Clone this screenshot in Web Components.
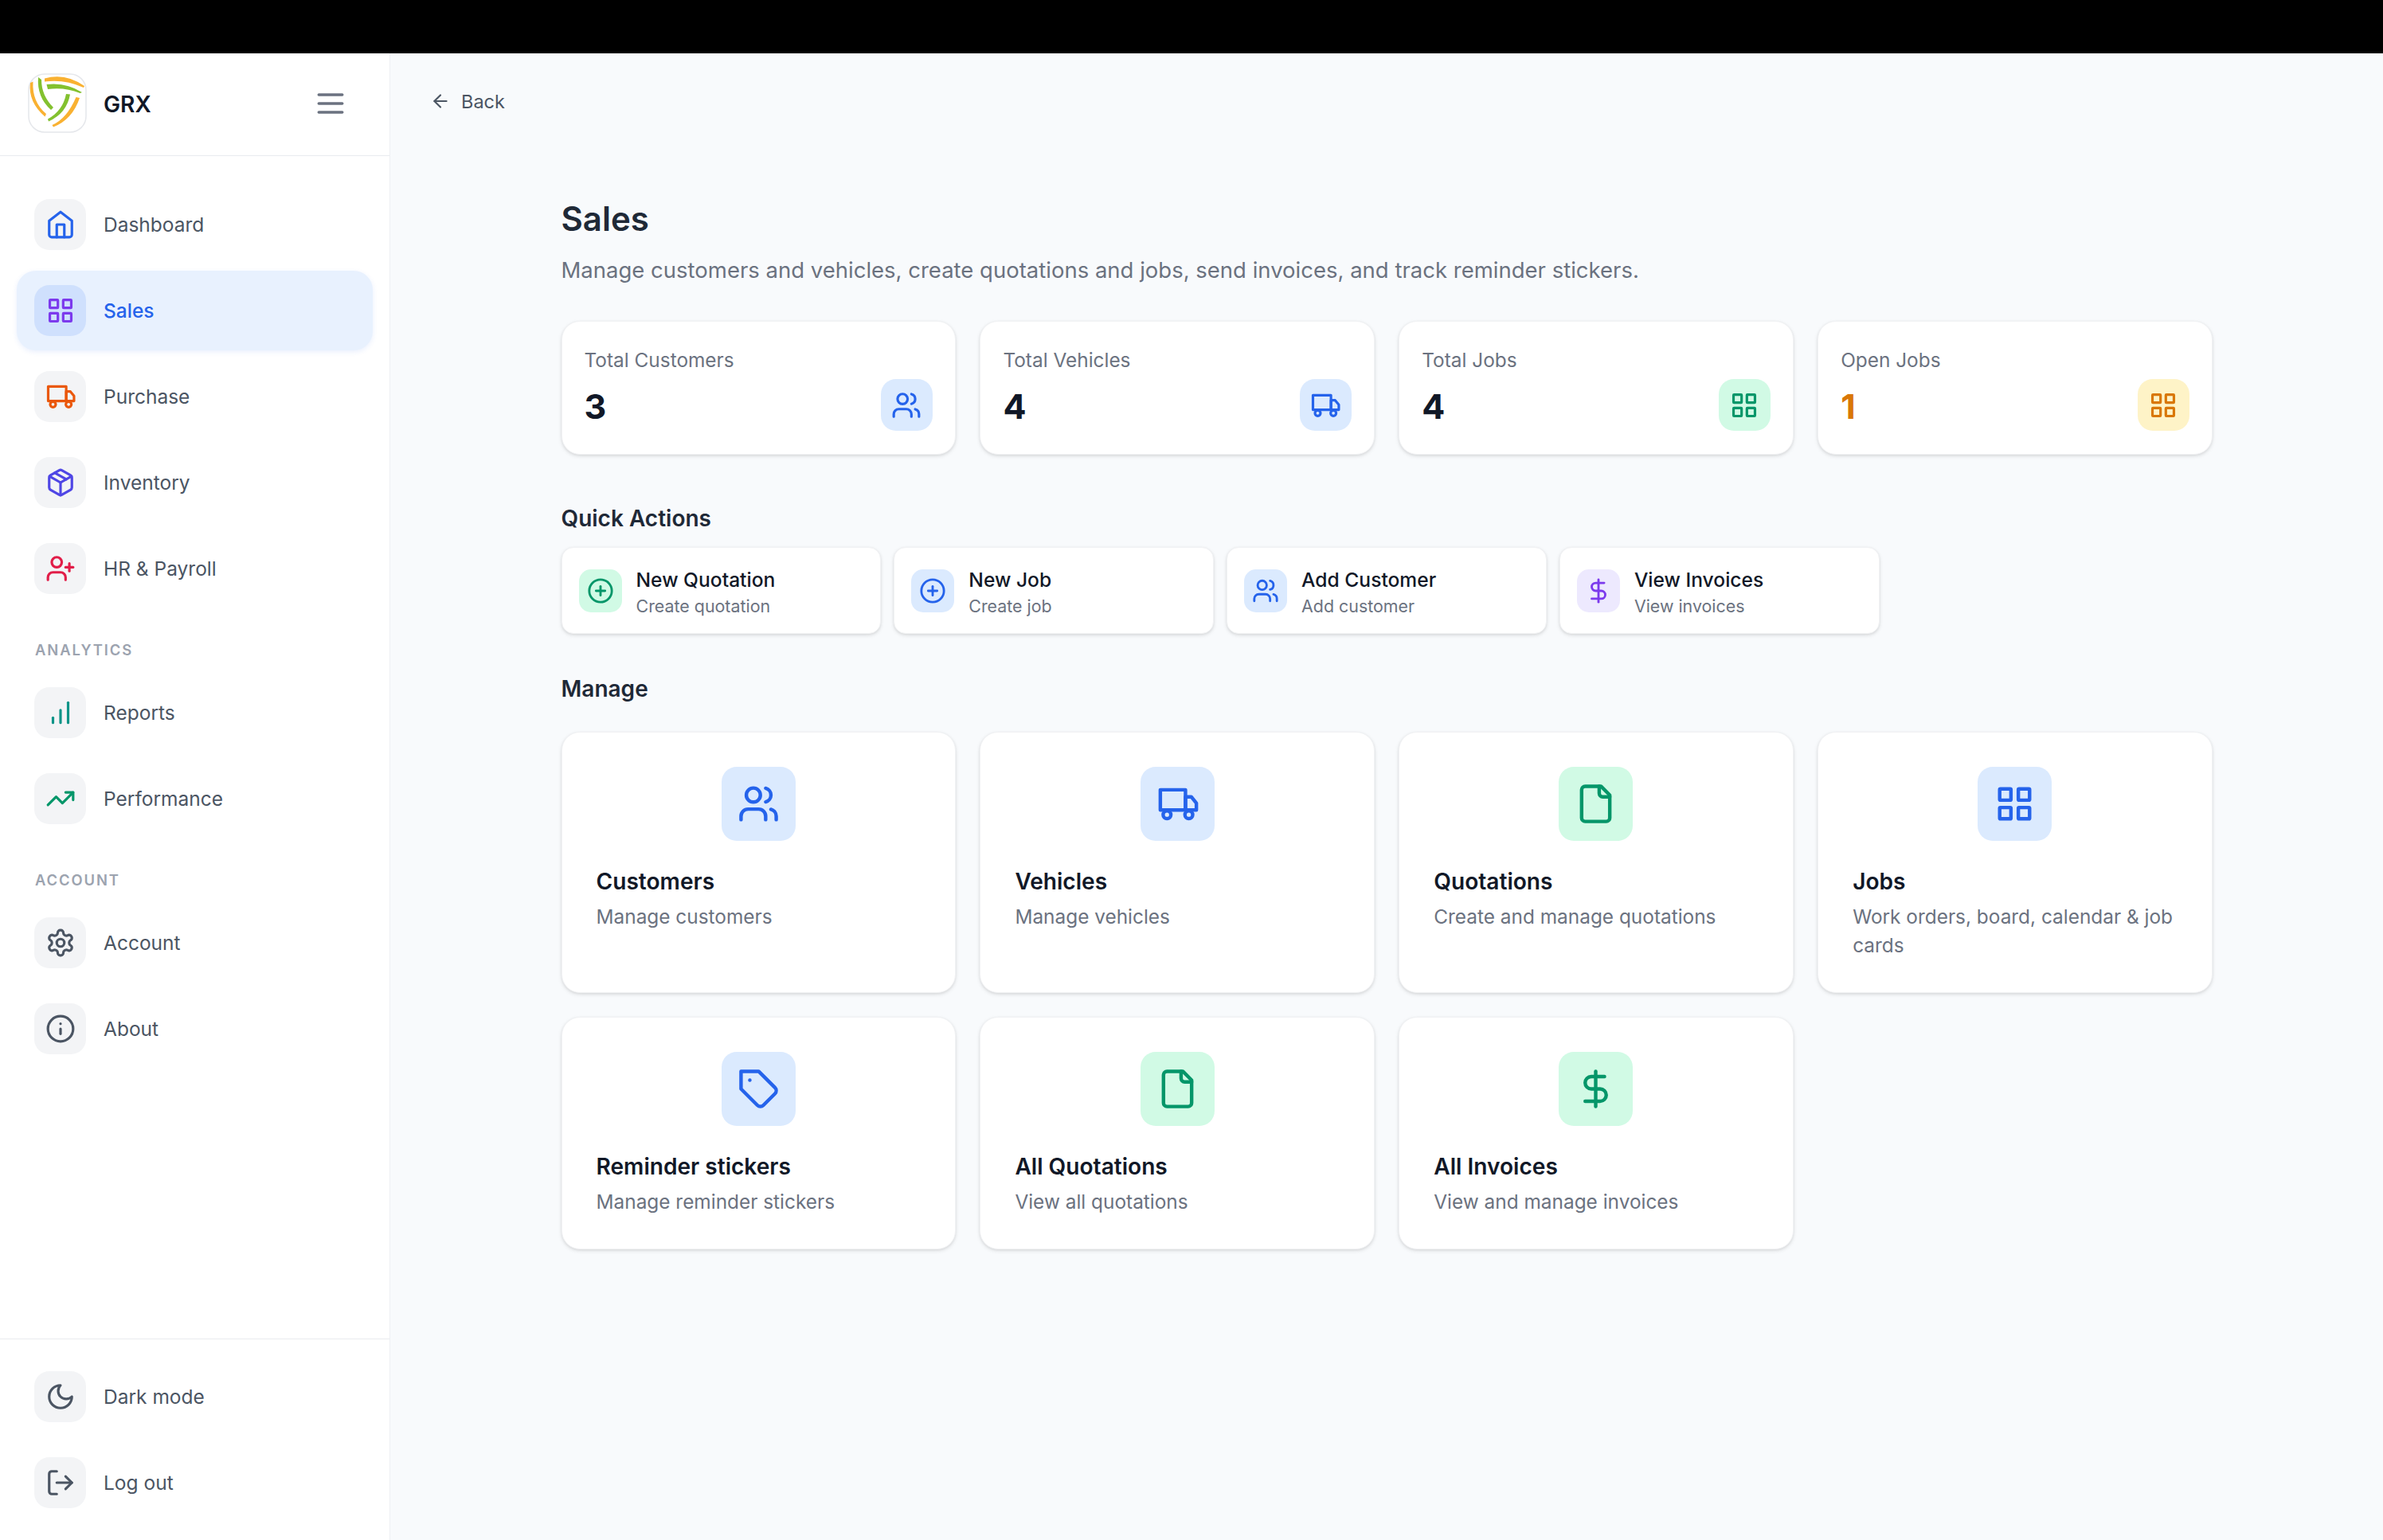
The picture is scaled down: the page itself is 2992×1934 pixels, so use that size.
<!DOCTYPE html>
<html lang="en">
<head>
<meta charset="utf-8">
<title>Sales</title>
<style>
html,body{margin:0;padding:0;background:#f8fafc;font-family:Inter,"Noto Sans",sans-serif;color:#111827;}
</style>
</head>
<body>
<app-shell>
  <side-bar slot="side">
    <nav-item icon="home" color="#2563eb">Dashboard</nav-item>
    <nav-item icon="grid" color="#7c3aed" active>Sales</nav-item>
    <nav-item icon="truck" color="#ea580c">Purchase</nav-item>
    <nav-item icon="package" color="#4f46e5">Inventory</nav-item>
    <nav-item icon="userplus" color="#e11d48">HR &amp; Payroll</nav-item>
    <nav-label>ANALYTICS</nav-label>
    <nav-item icon="bars" color="#0d9488">Reports</nav-item>
    <nav-item icon="trend" color="#059669">Performance</nav-item>
    <nav-label>ACCOUNT</nav-label>
    <nav-item icon="settings" color="#4b5563">Account</nav-item>
    <nav-item icon="info" color="#4b5563">About</nav-item>
    <nav-item slot="foot" icon="moon" color="#4b5563">Dark mode</nav-item>
    <nav-item slot="foot" icon="logout" color="#4b5563">Log out</nav-item>
  </side-bar>
  <back-link>Back</back-link>
  <page-content>
    <page-title slot="head" sub="Manage customers and vehicles, create quotations and jobs, send invoices, and track reminder stickers.">Sales</page-title>
    <card-grid cols="4" gap="30.5">
      <stat-card label="Total Customers" value="3" icon="users" tone="blue"></stat-card>
      <stat-card label="Total Vehicles" value="4" icon="truck" tone="blue"></stat-card>
      <stat-card label="Total Jobs" value="4" icon="grid" tone="green"></stat-card>
      <stat-card label="Open Jobs" value="1" icon="grid" tone="amber"></stat-card>
    </card-grid>
    <section-title top="58" bottom="14">Quick Actions</section-title>
    <card-grid cols="5" gap="16">
      <quick-action title-text="New Quotation" sub="Create quotation" icon="plus" tone="green"></quick-action>
      <quick-action title-text="New Job" sub="Create job" icon="plus" tone="blue"></quick-action>
      <quick-action title-text="Add Customer" sub="Add customer" icon="users" tone="blue"></quick-action>
      <quick-action title-text="View Invoices" sub="View invoices" icon="dollar" tone="violet"></quick-action>
    </card-grid>
    <section-title top="47" bottom="32">Manage</section-title>
    <card-grid cols="4" gap="30.5">
      <manage-card title-text="Customers" sub="Manage customers" icon="users" tone="blue"></manage-card>
      <manage-card title-text="Vehicles" sub="Manage vehicles" icon="truck" tone="blue"></manage-card>
      <manage-card title-text="Quotations" sub="Create and manage quotations" icon="file" tone="green"></manage-card>
      <manage-card title-text="Jobs" sub="Work orders, board, calendar &amp; job cards" icon="grid" tone="blue"></manage-card>
      <manage-card title-text="Reminder stickers" sub="Manage reminder stickers" icon="tag" tone="blue"></manage-card>
      <manage-card title-text="All Quotations" sub="View all quotations" icon="file" tone="green"></manage-card>
      <manage-card title-text="All Invoices" sub="View and manage invoices" icon="dollar" tone="green"></manage-card>
    </card-grid>
  </page-content>
</app-shell>
<script>
const ICONS = {
  home:'<path d="m3 9 9-7 9 7v11a2 2 0 0 1-2 2H5a2 2 0 0 1-2-2z"/><polyline points="9 22 9 12 15 12 15 22"/>',
  grid:'<rect x="3.5" y="3.5" width="6.4" height="6.4" rx=".4"/><rect x="14.1" y="3.5" width="6.4" height="6.4" rx=".4"/><rect x="14.1" y="14.1" width="6.4" height="6.4" rx=".4"/><rect x="3.5" y="14.1" width="6.4" height="6.4" rx=".4"/>',
  truck:'<path d="M2.2 4h14.3v11.5H2.2z"/><path d="M16.5 8h3.3l2.9 3.6v3.9h-6.2z"/><circle cx="6" cy="18.2" r="2.2"/><circle cx="18.4" cy="18.2" r="2.2"/>',
  package:'<path d="m7.5 4.27 9 5.15"/><path d="M21 8a2 2 0 0 0-1-1.73l-7-4a2 2 0 0 0-2 0l-7 4A2 2 0 0 0 3 8v8a2 2 0 0 0 1 1.73l7 4a2 2 0 0 0 2 0l7-4A2 2 0 0 0 21 16Z"/><path d="m3.3 7 8.7 5 8.7-5"/><path d="M12 22V12"/>',
  userplus:'<path d="M16 21v-2a4 4 0 0 0-4-4H6a4 4 0 0 0-4 4v2"/><circle cx="9" cy="7" r="4"/><line x1="19" x2="19" y1="8" y2="14"/><line x1="22" x2="16" y1="11" y2="11"/>',
  bars:'<line x1="12" x2="12" y1="20" y2="10"/><line x1="18" x2="18" y1="20" y2="4"/><line x1="6" x2="6" y1="20" y2="16"/>',
  trend:'<polyline points="22 7 13.5 15.5 8.5 10.5 2 17"/><polyline points="16 7 22 7 22 13"/>',
  settings:'<path d="M12.22 2h-.44a2 2 0 0 0-2 2v.18a2 2 0 0 1-1 1.73l-.43.25a2 2 0 0 1-2 0l-.15-.08a2 2 0 0 0-2.73.73l-.22.38a2 2 0 0 0 .73 2.73l.15.1a2 2 0 0 1 1 1.72v.51a2 2 0 0 1-1 1.74l-.15.09a2 2 0 0 0-.73 2.73l.22.38a2 2 0 0 0 2.73.73l.15-.08a2 2 0 0 1 2 0l.43.25a2 2 0 0 1 1 1.73V20a2 2 0 0 0 2 2h.44a2 2 0 0 0 2-2v-.18a2 2 0 0 1 1-1.73l.43-.25a2 2 0 0 1 2 0l.15.08a2 2 0 0 0 2.73-.73l.22-.39a2 2 0 0 0-.73-2.73l-.15-.08a2 2 0 0 1-1-1.74v-.5a2 2 0 0 1 1-1.74l.15-.09a2 2 0 0 0 .73-2.73l-.22-.38a2 2 0 0 0-2.73-.73l-.15.08a2 2 0 0 1-2 0l-.43-.25a2 2 0 0 1-1-1.73V4a2 2 0 0 0-2-2z"/><circle cx="12" cy="12" r="3"/>',
  info:'<circle cx="12" cy="12" r="10"/><path d="M12 16v-4"/><path d="M12 8h.01"/>',
  moon:'<path d="M12 3a6 6 0 0 0 9 9 9 9 0 1 1-9-9Z"/>',
  logout:'<path d="M9 21H5a2 2 0 0 1-2-2V5a2 2 0 0 1 2-2h4"/><polyline points="16 17 21 12 16 7"/><line x1="21" x2="9" y1="12" y2="12"/>',
  users:'<path d="M16 21v-2a4 4 0 0 0-4-4H6a4 4 0 0 0-4 4v2"/><circle cx="9" cy="7" r="4"/><path d="M22 21v-2a4 4 0 0 0-3-3.87"/><path d="M16 3.13a4 4 0 0 1 0 7.75"/>',
  file:'<path d="M15 2H6a2 2 0 0 0-2 2v16a2 2 0 0 0 2 2h12a2 2 0 0 0 2-2V7Z"/><path d="M14 2v4a2 2 0 0 0 2 2h4"/>',
  tag:'<path d="M12 2H2v10l9.29 9.29c.94.94 2.48.94 3.42 0l6.58-6.58c.94-.94.94-2.48 0-3.42L12 2Z"/><path d="M7 7h.01"/>',
  dollar:'<line x1="12" x2="12" y1="2" y2="22"/><path d="M17 5H9.5a3.5 3.5 0 0 0 0 7h5a3.5 3.5 0 0 1 0 7H6"/>',
  plus:'<circle cx="12" cy="12" r="10"/><path d="M8 12h8"/><path d="M12 8v8"/>',
  menu:'<line x1="4" x2="20" y1="12" y2="12"/><line x1="4" x2="20" y1="6" y2="6"/><line x1="4" x2="20" y1="18" y2="18"/>',
  back:'<path d="m12 19-7-7 7-7"/><path d="M19 12H5"/>'
};
const TONES = {
  blue:['#dbeafe','#2563eb'], green:['#d1fae5','#059669'],
  amber:['#fef3c7','#d97706'], violet:['#ede9fe','#7c3aed']
};
const esc = s => String(s).replace(/&/g,'&amp;').replace(/</g,'&lt;');
function shadow(el, html){ el.attachShadow({mode:'open'}).innerHTML = html; }

class UiIcon extends HTMLElement{
  connectedCallback(){
    const s = this.getAttribute('size')||38, w = this.getAttribute('stroke')||2;
    shadow(this,`<style>:host{display:flex;flex:none;width:${s}px;height:${s}px;color:inherit}svg{display:block}</style>
    <svg width="${s}" height="${s}" viewBox="0 0 24 24" fill="none" stroke="currentColor" stroke-width="${w}" stroke-linecap="round" stroke-linejoin="round">${ICONS[this.getAttribute('name')]||''}</svg>`);
  }
}
customElements.define('ui-icon',UiIcon);

class AppShell extends HTMLElement{
  constructor(){super();shadow(this,`<style>
  :host{display:block;min-height:1934px}
  .top{height:67px;background:#000}
  .row{display:flex;height:1867px}
  .main{flex:1;min-width:0;padding-top:40px;box-sizing:border-box;background:#f8fafc}
  </style><div class="top"></div><div class="row"><slot name="side"></slot><div class="main"><slot></slot></div></div>`);}
}
customElements.define('app-shell',AppShell);

class BrandLogo extends HTMLElement{
  constructor(){super();shadow(this,`<style>
  :host{display:block;flex:none;width:74px;height:75px}
  svg{display:block}
  </style><svg width="74" height="75" viewBox="0 0 74 75" fill="none">
  <rect x="1" y="1" width="72" height="73" rx="20" fill="#fff" stroke="#e5e7eb" stroke-width="1.5"/>
  <g fill="#f9b131">
    <path d="M21 6.5Q47 -1 71 16L70 18Q46 7 21 10.5Z"/>
    <path d="M3 12Q5 11 6.5 10.5Q5 36 23 51L21.5 54.5Q0 36 3 12Z"/>
    <path d="M30.5 65Q49 57 60.5 30L65 31Q56 58 32 67.5Z"/>
  </g>
  <g fill="#83c12f">
    <path d="M13 5L17 8Q17 28 32 43L29 46Q11 30 13 5Z"/>
    <path d="M23.5 14Q48 11 68 24L65.5 25Q46 17 25 20Z"/>
    <path d="M25 57.5Q44 47 48 26L53 26.5Q49 50 26 60.5Z"/>
  </g></svg>`);}
}
customElements.define('brand-logo',BrandLogo);

class SideBar extends HTMLElement{
  constructor(){super();shadow(this,`<style>
  :host{display:flex;flex-direction:column;flex:none;width:490px;box-sizing:border-box;background:#fff;border-right:1px solid #eef0f3}
  .head{height:129px;box-sizing:border-box;border-bottom:1.5px solid #e9ebef;display:flex;align-items:center;padding:0 52px 3px 35px;gap:21px}
  .name{font-size:28.2px;font-weight:600;color:#111827;flex:1;padding-top:2px}
  .menu{color:#6b7280;display:flex}
  nav{display:flex;flex-direction:column;gap:8px;padding:36px 21px 0;flex:1}
  .foot{display:flex;flex-direction:column;gap:8px;padding:22px 21px 22px;border-top:1.5px solid #e9ebef}
  </style>
  <div class="head"><brand-logo></brand-logo><span class="name">GRX</span><span class="menu"><ui-icon name="menu" size="44" stroke="2"></ui-icon></span></div>
  <nav><slot></slot></nav>
  <div class="foot"><slot name="foot"></slot></div>`);}
}
customElements.define('side-bar',SideBar);

class NavItem extends HTMLElement{
  connectedCallback(){
    const a = this.hasAttribute('active');
    shadow(this,`<style>
    :host{display:flex;align-items:center;height:100px;box-sizing:border-box;padding-left:22px;gap:22px;border-radius:24px;color:${a?'#2563eb':'#4b5563'};font-size:24.5px;font-weight:${a?500:400};
      ${a?'background:#e8f1fe;box-shadow:0 2px 6px rgba(37,99,235,.10)':''}}
    .ic{width:65px;height:64px;border-radius:19px;background:${a?'#cfe0fd':'#f3f4f6'};display:flex;align-items:center;justify-content:center;color:${this.getAttribute('color')};flex:none}
    </style><span class="ic"><ui-icon name="${this.getAttribute('icon')}" size="38" stroke="2"></ui-icon></span><span><slot></slot></span>`);
  }
}
customElements.define('nav-item',NavItem);

class NavLabel extends HTMLElement{
  constructor(){super();shadow(this,`<style>
  :host{display:block;margin:29px 0 6px 23px;height:30px;line-height:30px;font-size:18.4px;font-weight:600;letter-spacing:1.9px;color:#9ca3af}
  </style><slot></slot>`);}
}
customElements.define('nav-label',NavLabel);

class BackLink extends HTMLElement{
  constructor(){super();shadow(this,`<style>
  :host{display:flex;align-items:center;gap:13px;height:40px;margin-left:50px;font-size:23.5px;color:#4b5563}
  ui-icon{color:#4b5563}
  </style><ui-icon name="back" size="26" stroke="2"></ui-icon><span><slot></slot></span>`);}
}
customElements.define('back-link',BackLink);

class PageContent extends HTMLElement{
  constructor(){super();shadow(this,`<style>
  :host{display:block;width:2073px;margin:98px auto 0}
  </style><slot name="head"></slot><slot></slot>`);}
}
customElements.define('page-content',PageContent);

class PageTitle extends HTMLElement{
  connectedCallback(){
    shadow(this,`<style>
    :host{display:block;margin-bottom:41px}
    h1{margin:0;font-size:42px;line-height:60px;font-weight:600;color:#1f2937}
    p{margin:11px 0 0;font-size:27.5px;line-height:46px;color:#6b7280}
    </style><h1><slot></slot></h1><p>${esc(this.getAttribute('sub'))}</p>`);
  }
}
customElements.define('page-title',PageTitle);

class SectionTitle extends HTMLElement{
  connectedCallback(){
    shadow(this,`<style>
    :host{display:block;margin:${this.getAttribute('top')}px 0 ${this.getAttribute('bottom')}px;font-size:28px;line-height:44px;font-weight:600;color:#1f2937}
    </style><slot></slot>`);
  }
}
customElements.define('section-title',SectionTitle);

class CardGrid extends HTMLElement{
  connectedCallback(){
    const g=+this.getAttribute('gap');
    shadow(this,`<style>
    :host{display:grid;grid-template-columns:repeat(${this.getAttribute('cols')},minmax(0,1fr));column-gap:${g}px;row-gap:30px}
    </style><slot></slot>`);
  }
}
customElements.define('card-grid',CardGrid);

const CARD = `background:#fff;box-sizing:border-box;border:1.5px solid #f1f2f4;box-shadow:0 2px 5px rgba(0,0,0,.10),0 1px 3px rgba(0,0,0,.06);`;

class StatCard extends HTMLElement{
  connectedCallback(){
    const [bg,fg]=TONES[this.getAttribute('tone')];
    const amber=this.getAttribute('tone')==='amber';
    shadow(this,`<style>
    :host{display:block;height:168px;border-radius:23px;padding:29px 28px 0 28px;${CARD}}
    .l{font-size:24.4px;line-height:38px;color:#6b7280}
    .r{display:flex;justify-content:space-between;align-items:center;margin-top:5px}
    .v{font-size:43px;line-height:56px;font-weight:700;color:${amber?'#d97706':'#111827'};padding-top:3px}
    .i{width:65px;height:65px;border-radius:19px;background:${bg};color:${fg};display:flex;align-items:center;justify-content:center}
    </style><div class="l">${esc(this.getAttribute('label'))}</div>
    <div class="r"><span class="v">${esc(this.getAttribute('value'))}</span><span class="i"><ui-icon name="${this.getAttribute('icon')}" size="38"></ui-icon></span></div>`);
  }
}
customElements.define('stat-card',StatCard);

class QuickAction extends HTMLElement{
  connectedCallback(){
    const [bg,fg]=TONES[this.getAttribute('tone')];
    shadow(this,`<style>
    :host{display:flex;align-items:center;gap:18px;height:109px;border-radius:15px;padding:0 21px;${CARD}}
    .i{width:54px;height:54px;flex:none;border-radius:15px;background:${bg};color:${fg};display:flex;align-items:center;justify-content:center}
    .t{font-size:24.6px;line-height:36px;font-weight:500;color:#111827}
    .s{font-size:21.4px;line-height:30px;color:#6b7280}
    .b{padding-top:3px}
    </style><span class="i"><ui-icon name="${this.getAttribute('icon')}" size="34"></ui-icon></span>
    <div class="b"><div class="t">${esc(this.getAttribute('title-text'))}</div><div class="s">${esc(this.getAttribute('sub'))}</div></div>`);
  }
}
customElements.define('quick-action',QuickAction);

class ManageCard extends HTMLElement{
  connectedCallback(){
    const [bg,fg]=TONES[this.getAttribute('tone')];
    shadow(this,`<style>
    :host{display:block;border-radius:23px;padding:43px 43px 41px;${CARD}}
    .i{width:93px;height:93px;margin:0 auto 31px;border-radius:19px;background:${bg};color:${fg};display:flex;align-items:center;justify-content:center}
    .t{font-size:28.1px;line-height:40px;font-weight:600;color:#111827}
    .s{margin-top:6px;font-size:24.4px;line-height:36px;color:#6b7280}
    </style><div class="i"><ui-icon name="${this.getAttribute('icon')}" size="53" stroke="2"></ui-icon></div>
    <div class="t">${esc(this.getAttribute('title-text'))}</div><div class="s">${esc(this.getAttribute('sub'))}</div>`);
  }
}
customElements.define('manage-card',ManageCard);
</script>
</body>
</html>
